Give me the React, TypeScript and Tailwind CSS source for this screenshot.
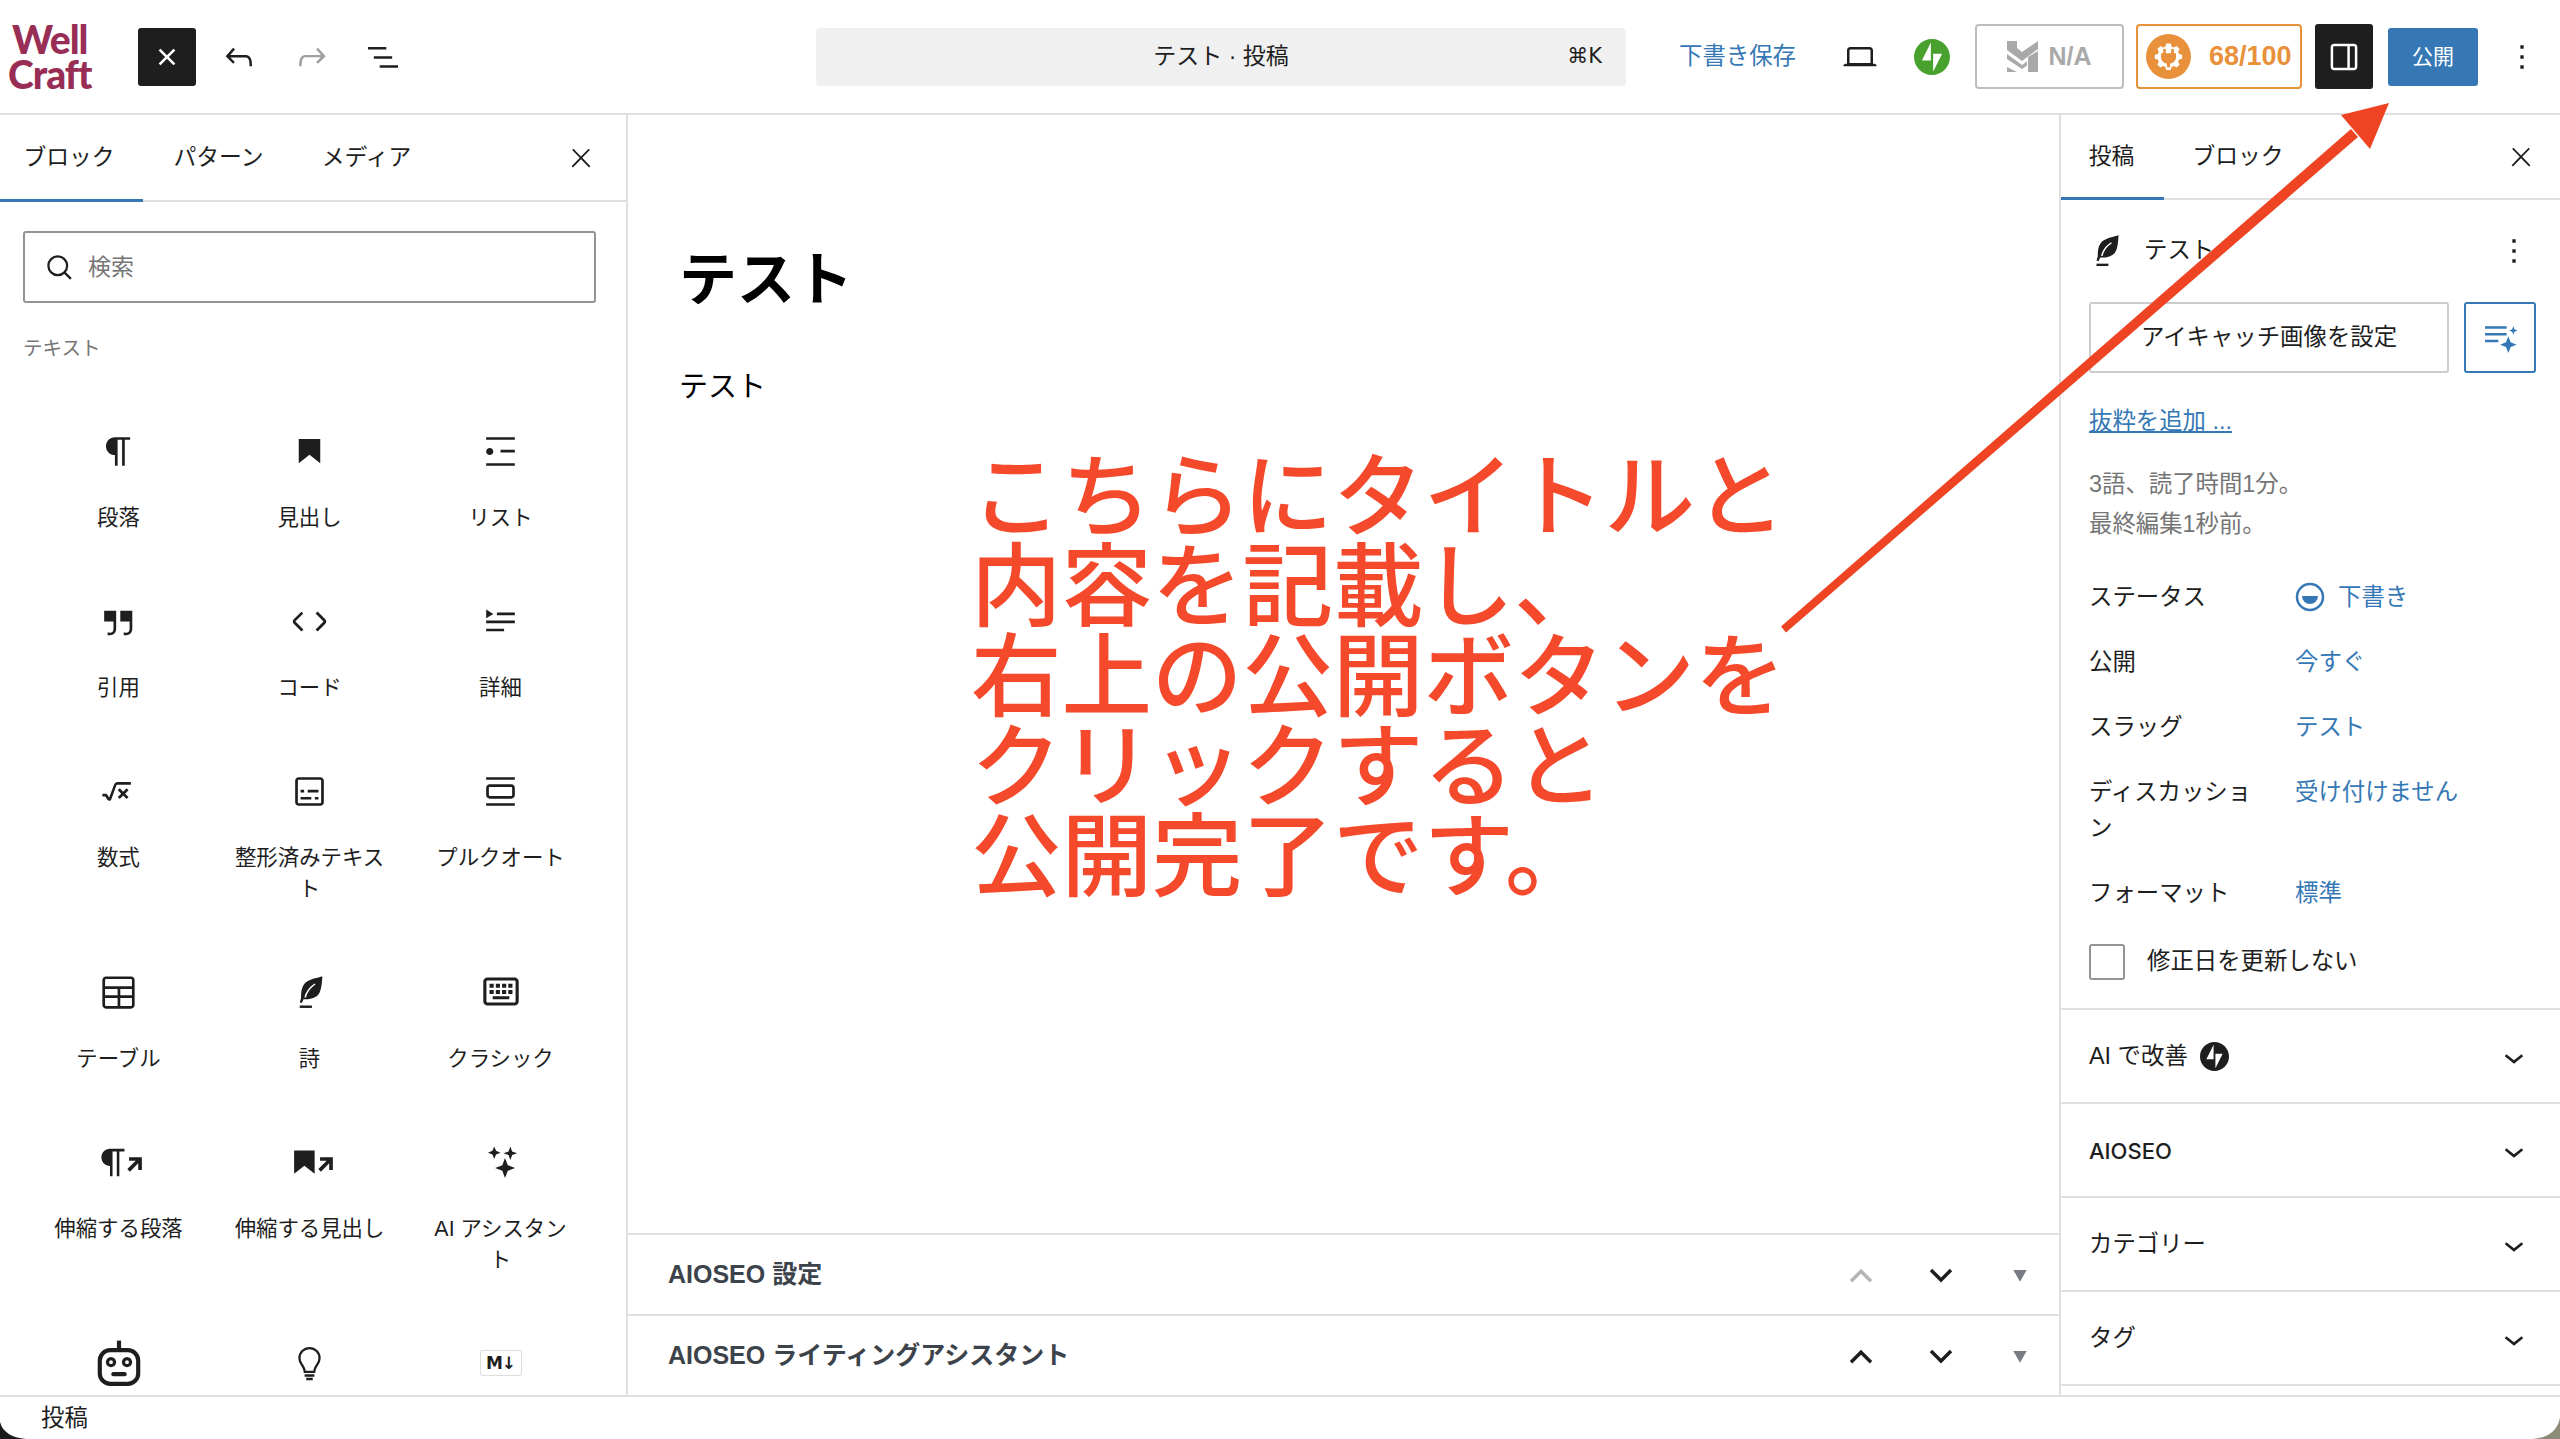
import type { ReactNode } from "react";

const FONT = "[font-family:'Liberation_Sans','Noto_Sans_CJK_JP',sans-serif]";

function Icon({ d, size = 43, className = "fill-[#1e1e1e]" }: { d: string; size?: number; className?: string }) {
    return (
        <svg viewBox="0 0 24 24" width={size} height={size} className={className}>
            <path d={d} />
        </svg>
    );
}

const paths = {
    close: "M12 13.06l3.712 3.713 1.061-1.06L13.061 12l3.712-3.712-1.06-1.06L12 10.938 8.288 7.227l-1.061 1.06L10.939 12l-3.712 3.712 1.06 1.061L12 13.061z",
    closeBig: "M13 11.8l6.1-6.3-1-1-6.1 6.2-6.1-6.2-1 1 6.1 6.3-6.5 6.7 1 1 6.5-6.6 6.5 6.6 1-1z",
    undo: "M18.3 11.7c-.6-.6-1.4-.9-2.3-.9H6.7l2.9-3.3-1.1-1-4.5 5L8.5 16l1-1-2.7-2.7H16c.5 0 .9.2 1.3.5 1 1 1 3.4 1 4.5v.3h1.5v-.2c0-1.5 0-4.3-1.5-5.7z",
    redo: "M15.6 6.5l-1.1 1 2.9 3.3H8c-.9 0-1.7.3-2.3.9-1.4 1.5-1.4 4.2-1.4 5.6v.2h1.5v-.3c0-1.1 0-3.5 1-4.5.3-.3.7-.5 1.3-.5h9.2L14.5 15l1.1 1.1 4.6-4.6-4.6-5z",
    listView: "M3 6h11v1.5H3V6Zm3.5 5.5h11V13h-11v-1.5ZM21 17H10v1.5h11V17Z",
    laptop: "M20.5 16h-.7V8c0-1.1-.9-2-2-2H6.2c-1.1 0-2 .9-2 2v8h-.7c-.8 0-1.5.7-1.5 1.5h20c0-.8-.7-1.5-1.5-1.5zM5.7 8c0-.3.2-.5.5-.5h11.6c.3 0 .5.2.5.5v7.6H5.7V8z",
    drawer: "M18 4H6c-1.1 0-2 .9-2 2v12c0 1.1.9 2 2 2h12c1.1 0 2-.9 2-2V6c0-1.1-.9-2-2-2zm-4 14.5H6c-.3 0-.5-.2-.5-.5V6c0-.3.2-.5.5-.5h8v13zm4.5-.5c0 .3-.2.5-.5.5h-2.5v-13H18c.3 0 .5.2.5.5v12z",
    more: "M13 19h-2v-2h2v2zm0-6h-2v-2h2v2zm0-6h-2V5h2v2z",
    chevronDown: "M17.5 11.6L12 16l-5.5-4.4.9-1.2L12 14l4.5-3.6 1 1.2z",
    paragraph: "m9.99609 14v-.2251l.00391.0001v6.225h1.5v-14.5h2.5v14.5h1.5v-14.5h3v-1.5h-8.50391c-2.76142 0-5 2.23858-5 5 0 2.7614 2.23858 5 5 5z",
    heading: "M6 5V18.5911L12 13.8473L18 18.5911V5H6Z",
    list: "M4 4v1.5h16V4H4zm8 8.5h8V11h-8v1.5zM4 20h16v-1.5H4V20zm4-8c0-1.1-.9-2-2-2s-2 .9-2 2 .9 2 2 2 2-.9 2-2z",
    quote: "M13 6v6h5.2v4c0 .8-.2 1.4-.5 1.7-.6.6-1.6.6-2.5.5h-.3v1.5h.5c1 0 2.3-.1 3.3-1 .6-.6 1-1.6 1-2.8V6H13zm-9 6h5.2v4c0 .8-.2 1.4-.5 1.7-.6.6-1.6.6-2.5.5h-.3v1.5h.5c1 0 2.3-.1 3.3-1 .6-.6 1-1.6 1-2.8V6H4v6z",
    code: "M20.8 10.7l-4.3-4.3-1.1 1.1 4.3 4.3c.1.1.1.3 0 .4l-4.3 4.3 1.1 1.1 4.3-4.3c.7-.8.7-1.9 0-2.6zM4.2 11.8l4.3-4.3-1-1-4.3 4.3c-.7.7-.7 1.8 0 2.5l4.3 4.3 1.1-1.1-4.3-4.3c-.2-.1-.2-.3-.1-.4z",
    details: "M4 16h10v1.5H4V16Zm0-4.5h16V13H4v-1.5ZM10 7h10v1.5H10V7ZM4 5.25l4 2.5-4 2.5v-5Z",
    math: "M11.2 6.8c-.7 0-1.4.5-1.6 1.1l-2.8 7.5-1.2-1.8c-.1-.2-.4-.3-.6-.3H3v1.5h1.6l1.2 1.8c.6.9 1.9.7 2.2-.3l2.9-7.9s.1-.2.2-.2h7.8V6.7h-7.8Zm5.3 3.4-1.9 1.9-1.9-1.9-1.1 1.1 1.9 1.9-1.9 1.9 1.1 1.1 1.9-1.9 1.9 1.9 1.1-1.1-1.9-1.9 1.9-1.9-1.1-1.1Z",
    preformatted: "M18 4H6c-1.1 0-2 .9-2 2v12c0 1.1.9 2 2 2h12c1.1 0 2-.9 2-2V6c0-1.1-.9-2-2-2zm.5 14c0 .3-.2.5-.5.5H6c-.3 0-.5-.2-.5-.5V6c0-.3.2-.5.5-.5h12c.3 0 .5.2.5.5v12zM7 16.5h6V15H7v1.5zm4-4h6V11h-6v1.5zM9 11H7v1.5h2V11zm6 5.5h2V15h-2v1.5z",
    pullquote: "M18 8H6c-1.1 0-2 .9-2 2v4c0 1.1.9 2 2 2h12c1.1 0 2-.9 2-2v-4c0-1.1-.9-2-2-2zm.5 6c0 .3-.2.5-.5.5H6c-.3 0-.5-.2-.5-.5v-4c0-.3.2-.5.5-.5h12c.3 0 .5.2.5.5v4zM4 4v1.5h16V4H4zm0 16h16v-1.5H4V20z",
    table: "M19 3H5c-1.1 0-2 .9-2 2v14c0 1.1.9 2 2 2h14c1.1 0 2-.9 2-2V5c0-1.1-.9-2-2-2zM5 4.5h14c.3 0 .5.2.5.5v3.5h-15V5c0-.3.2-.5.5-.5zm8 5.5h6.5v3.5H13V10zm-1.5 3.5h-7V10h7v3.5zm-7 5.5v-4h7v4.5H5c-.3 0-.5-.2-.5-.5zm14.5.5h-6V15h6.5v4c0 .3-.2.5-.5.5z",
    keyboard: "M16 15.5H8V14h8zM8.5 13h-2v-2h2zm3 0h-2v-2h2zm3 0h-2v-2h2zm3 0h-2v-2h2zm-9-3h-2V8h2zm3 0h-2V8h2zm3 0h-2V8h2zm3 0h-2V8h2zM18.5 6.5h-13a.5.5 0 0 0-.5.5v9.5a.5.5 0 0 0 .5.5h13a.5.5 0 0 0 .5-.5V7a.5.5 0 0 0-.5-.5zM5.5 5h13a2 2 0 0 1 2 2v9.5a2 2 0 0 1-2 2h-13a2 2 0 0 1-2-2V7a2 2 0 0 1 2-2z",
    sparkles: "M14.5 9.5l1.6 4 4 1.5-4 1.6-1.6 4-1.5-4-4-1.6 4-1.5zM8.5 3l1 2.5 2.5 1-2.5 1-1 2.5-1-2.5-2.5-1 2.5-1zM17.5 3l1 2.8 2.8 1-2.8 1-1 2.8-1-2.8-2.8-1 2.8-1z",
    leaf: "M20 2c-3 1-7.5 1.500-10.500 4C7 8.500 6.800 12 6.800 15.500L6 18l1.300.5 1-2.400c3.500.3 7.500-.5 9.300-3 2-2.900 2-7.500 2.400-11.600zM8.900 15c.8-3.300 2.600-6 6.300-8.500l.5.600c-3.400 2.400-5 4.800-5.800 8z",
    leafLine: "M6 20h7.500v1.500H6z",
    stretchArrow: "M15.5 7.5h6v6h-1.7v-3.1l-3.9 3.9-1.2-1.2 3.9-3.9h-3.1z",
    jetpack: "M16 0C7.2 0 0 7.2 0 16s7.2 16 16 16 16-7.2 16-16S24.8 0 16 0ZM15 19H7l8-16v16Zm2 10V13h8l-8 16Z",
};

function Jetpack({ size, color }: { size: number; color: string }) {
    return (
        <svg viewBox="0 0 32 32" width={size} height={size} fill={color}>
            <path d={paths.jetpack} />
        </svg>
    );
}

function Feather({ size = 39 }: { size?: number }) {
    return (
        <svg viewBox="0 0 24 24" width={size} height={size} fill="#1e1e1e">
            <path d={paths.leaf} fillRule="evenodd" />
            <path d={paths.leafLine} />
        </svg>
    );
}

function Stretchy({ d }: { d: string }) {
    return (
        <svg viewBox="0 0 24 24" width={41} height={41} fill="#1e1e1e" className="overflow-visible">
            <path d={d} transform="translate(-3 0)" />
            <path d={paths.stretchArrow} transform="translate(-1.2 -.5) scale(1.25)" />
        </svg>
    );
}

function Robot() {
    return (
        <svg viewBox="0 0 30 30" width={48} height={48} fill="none" stroke="#1e1e1e" strokeWidth="2.6">
            <path d="M15 1v6" />
            <rect x="3" y="7" width="24" height="21" rx="6.5" />
            <circle cx="10" cy="14.5" r="2.2" strokeWidth="2" />
            <circle cx="20" cy="14.5" r="2.2" strokeWidth="2" />
            <path d="M11.5 22h7" strokeLinecap="round" />
        </svg>
    );
}

function Bulb() {
    return (
        <svg viewBox="0 0 24 24" width={39} height={39} fill="none" stroke="#1e1e1e" strokeWidth="1.4">
            <path d="M12 2.5a6.2 6.2 0 0 0-6.2 6.3c0 2.4 1.4 3.6 2.4 5.4.5.9.8 2 .9 3h5.8c.1-1 .4-2.1.9-3 1-1.8 2.4-3 2.4-5.4A6.2 6.2 0 0 0 12 2.5z" />
            <path d="M9 19.4h6M10 21.5h4" strokeWidth="1.5" />
        </svg>
    );
}

function Markdown() {
    return (
        <div className="flex h-[26px] w-[42px] items-center justify-center rounded-[2px] border border-[#ddd] text-[17px] leading-none font-bold tracking-[-1px] text-[#1e1e1e] [font-family:'DejaVu_Sans',sans-serif]">
            M↓
        </div>
    );
}

const blocks: { label: string; icon: ReactNode }[] = [
    { label: "段落", icon: <Icon d={paths.paragraph} /> },
    { label: "見出し", icon: <Icon d={paths.heading} /> },
    { label: "リスト", icon: <Icon d={paths.list} /> },
    { label: "引用", icon: <Icon d={paths.quote} /> },
    { label: "コード", icon: <Icon d={paths.code} /> },
    { label: "詳細", icon: <Icon d={paths.details} /> },
    { label: "数式", icon: <Icon d={paths.math} /> },
    { label: "整形済みテキスト", icon: <Icon d={paths.preformatted} /> },
    { label: "プルクオート", icon: <Icon d={paths.pullquote} /> },
    { label: "テーブル", icon: <Icon d={paths.table} /> },
    { label: "詩", icon: <Feather /> },
    { label: "クラシック", icon: <Icon d={paths.keyboard} size={50} /> },
    { label: "伸縮する段落", icon: <Stretchy d={paths.paragraph} /> },
    { label: "伸縮する見出し", icon: <Stretchy d={paths.heading} /> },
    { label: "AI アシスタン\nト", icon: <Icon d={paths.sparkles} /> },
    { label: "", icon: <Robot /> },
    { label: "", icon: <Bulb /> },
    { label: "", icon: <Markdown /> },
];

function Header() {
    return (
        <header className="flex h-[115px] shrink-0 items-center border-b-2 border-[#e0e0e0] bg-white">
            <div className="w-[138px] pl-[8px] text-[39px] leading-[35px] font-black tracking-[-1px] text-[#982e55] [font-family:'Lato',sans-serif]">
                <div className="pl-[4px]">Well</div>
                <div>Craft</div>
            </div>
            <button className="flex h-[58px] w-[58px] items-center justify-center rounded-[3px] bg-[#1e1e1e]">
                <Icon d={paths.close} size={42} className="fill-white" />
            </button>
            <div className="ml-[23px]"><Icon d={paths.undo} size={40} /></div>
            <div className="ml-[33px]"><Icon d={paths.redo} size={40} className="fill-[#a0a0a0]" /></div>
            <div className="ml-[31px]"><Icon d={paths.listView} size={40} /></div>
            <div className="relative ml-[413px] flex h-[58px] w-[810px] items-center justify-center rounded-[4px] bg-[#f0f0f0] text-[23px] text-[#1e1e1e]">
                テスト · 投稿
                <span className="absolute right-[24px] text-[21px] [font-family:'DejaVu_Sans','Liberation_Sans',sans-serif]">⌘K</span>
            </div>
            <div className="ml-[53px] w-[116px] text-[23.4px] whitespace-nowrap text-[#3578b5]">下書き保存</div>
            <div className="ml-[45px]"><Icon d={paths.laptop} size={40} /></div>
            <div className="ml-[34px]"><Jetpack size={36} color="#48a02d" /></div>
            <div className="ml-[25px] flex h-[65px] w-[149px] items-center justify-center gap-[10px] rounded-[4px] border-2 border-[#bdbdbd]">
                <svg viewBox="0 0 31 31" width={31} height={31} fill="#a9a9a9">
                    <path d="M0 0h10v7l5 4L31 0v8L15 20 0 9zM21 16l10-6v21H21zM0 13l15 11 5-3.500v4l-5 3.500-15-10zM0 26l10 5H0z" />
                </svg>
                <span className="text-[25px] font-bold text-[#a9a9a9]">N/A</span>
            </div>
            <div className="ml-[12px] flex h-[65px] w-[166px] items-center gap-[18px] rounded-[4px] border-2 border-[#e8903a] pl-[8px]">
                <svg viewBox="0 0 42 42" width={45} height={45} className="shrink-0">
                    <circle cx="21" cy="21" r="21" fill="#e8903a" />
                    <path d="M18 7h6l1 4 3 1.300 3.500-2 4 4-2 3.500 1.300 3 4 1v5l-4 1-1.300 3 2 3.500-4 4-3.500-2-3 1.300-1 4h-6l-1-4-3-1.300-3.500 2-4-4 2-3.500-1.300-3-4-1v-5l4-1 1.300-3-2-3.500 4-4 3.500 2 3-1.300z" fill="#fff" transform="translate(21 21) scale(.72) translate(-21 -24)" />
                    <path d="M16 14h2.500v4h5v-4H26v4h2v3.500c0 3-2 5.500-5.500 6V31h-3v-3.500c-3.500-.5-5.500-3-5.500-6V18h2z" fill="#e8903a" />
                </svg>
                <span className="text-[27px] font-bold whitespace-nowrap text-[#e8903a]">68/100</span>
            </div>
            <button className="ml-[13px] flex h-[65px] w-[58px] items-center justify-center rounded-[3px] bg-[#1e1e1e]">
                <Icon d={paths.drawer} size={40} className="fill-white" />
            </button>
            <button className="ml-[15px] h-[58px] w-[90px] rounded-[3px] bg-[#3578b5] text-[21px] text-white">公開</button>
            <div className="ml-[24px]"><Icon d={paths.more} size={40} /></div>
        </header>
    );
}

function Tab({ label, active, width }: { label: string; active?: boolean; width: string }) {
    return (
        <div className={`relative flex h-full items-center justify-center text-[22.8px] whitespace-nowrap text-[#1e1e1e] ${width}`}>
            {label}
            {active && <span className="absolute right-0 bottom-[-2px] left-0 h-[3px] bg-[#3578b5]" />}
        </div>
    );
}

function BlockInserter() {
    return (
        <aside className="flex w-[628px] shrink-0 flex-col overflow-hidden border-r-2 border-[#e0e0e0]">
            <div className="relative flex h-[87px] shrink-0 items-center border-b-2 border-[#e0e0e0]">
                <Tab label="ブロック" active width="w-[143px] pr-[5px]" />
                <Tab label="パターン" width="w-[147px] ml-[2px]" />
                <Tab label="メディア" width="w-[147px] ml-[1px]" />
                <div className="absolute right-[30px]"><Icon d={paths.closeBig} size={30} /></div>
            </div>
            <div className="mt-[29px] mr-[30px] ml-[23px] flex h-[72px] shrink-0 items-center rounded-[3px] border-2 border-[#949494] pl-[19px] text-[23px] text-[#757575]">
                <svg viewBox="0 0 24 24" width={30} height={30} fill="none" stroke="#1e1e1e" strokeWidth="1.8">
                    <circle cx="11" cy="11" r="7.500" />
                    <path d="M16.500 16.500l5 5" />
                </svg>
                <span className="ml-[14px]">検索</span>
            </div>
            <div className="mt-[31px] mr-[30px] ml-[23px] h-[28px] shrink-0 text-[19.5px] leading-[28px] text-[#757575]">テキスト</div>
            <div className="mt-[39px] mr-[30px] ml-[23px] grid grid-cols-3">
                {blocks.map((b, i) => (
                    <div key={i} className="flex flex-col items-center pt-[30px] pb-[37px]">
                        <div className="flex h-[40px] items-center justify-center">{b.icon}</div>
                        <div className="mt-[32px] max-w-[160px] text-center text-[21.4px] leading-[31px] whitespace-pre-line text-[#1e1e1e]">{b.label}</div>
                    </div>
                ))}
            </div>
        </aside>
    );
}

function MetaBox({ title, upDisabled }: { title: string; upDisabled?: boolean }) {
    return (
        <div className="flex h-[81px] shrink-0 items-center border-t-2 border-[#e0e0e0] pl-[40px]">
            <div className="flex-1 text-[25px] font-semibold text-[#3c434a]">{title}</div>
            <svg viewBox="0 0 24 24" width={30} height={30} fill="none" stroke={upDisabled ? "#b5b5b5" : "#1e1e1e"} strokeWidth="2.8">
                <path d="M4 17l8-8 8 8" />
            </svg>
            <svg viewBox="0 0 24 24" width={30} height={30} fill="none" stroke="#1e1e1e" strokeWidth="2.8" className="ml-[50px]">
                <path d="M4 8l8 8 8-8" />
            </svg>
            <svg viewBox="0 0 24 24" width={20} height={20} fill="#787c82" className="mr-[29px] ml-[54px]">
                <path d="M4 6h16l-8 14z" />
            </svg>
        </div>
    );
}

function Editor() {
    return (
        <main className="flex min-w-0 flex-1 flex-col">
            <div className="flex-1 pt-[130px] pl-[51px] text-black">
                <div className="text-[58px] leading-[70px] font-bold">テスト</div>
                <div className="mt-[52px] text-[29px] leading-[40px]">テスト</div>
            </div>
            <MetaBox title="AIOSEO 設定" upDisabled />
            <MetaBox title="AIOSEO ライティングアシスタント" />
        </main>
    );
}

function MetaRow({ label, children }: { label: string; children: ReactNode }) {
    return (
        <div className="flex text-[23.4px] leading-[36px]">
            <div className="w-[206px] shrink-0 pr-[28px] text-[#1e1e1e]">{label}</div>
            <div className="text-[#3578b5]">{children}</div>
        </div>
    );
}

function PanelRow({ children }: { children: ReactNode }) {
    return (
        <div className="flex h-[94px] shrink-0 items-center justify-between border-b-2 border-[#e0e0e0] pt-[2px] pr-[26px] pl-[28px] text-[23.4px] text-[#1e1e1e]">
            {children}
            <Icon d={paths.chevronDown} size={40} />
        </div>
    );
}

function SettingsSidebar() {
    return (
        <aside className="flex w-[501px] shrink-0 flex-col overflow-hidden border-l-2 border-[#e0e0e0]">
            <div className="relative flex h-[85px] shrink-0 items-center border-b-2 border-[#e0e0e0]">
                <Tab label="投稿" active width="w-[105px] -ml-[2px]" />
                <Tab label="ブロック" width="w-[90px] ml-[29px]" />
                <div className="absolute right-[24px]"><Icon d={paths.closeBig} size={30} /></div>
            </div>
            <div className="pr-[24px] pl-[28px]">
                <div className="mt-[31px] flex h-[40px] items-center text-[23.4px] text-[#1e1e1e]">
                    <div className="-ml-[2px]"><Feather size={38} /></div>
                    <span className="ml-[19px] flex-1">テスト</span>
                    <div className="mr-[2px]"><Icon d={paths.more} size={40} /></div>
                </div>
                <div className="mt-[31px] flex h-[71px] gap-[15px]">
                    <div className="flex w-[360px] items-center justify-center rounded-[3px] border-2 border-[#cccccc] text-[23.4px] text-[#1e1e1e]">アイキャッチ画像を設定</div>
                    <div className="flex w-[72px] items-center justify-center rounded-[3px] border-2 border-[#3578b5]">
                        <svg viewBox="0 0 24 24" width={40} height={40} fill="#3578b5">
                            <path d="M3 5h13v1.500H3zM3 9h13v1.500H3zM3 13h8v1.500H3zM17 11l1.400 3.600 3.600 1.400-3.600 1.400L17 21l-1.400-3.600-3.600-1.400 3.600-1.400zM20 5l.7 1.800 1.800.7-1.800.7L20 10l-.7-1.800-1.800-.7 1.800-.7z" />
                        </svg>
                    </div>
                </div>
                <div className="mt-[30px] text-[23.4px] leading-[36px] text-[#3578b5] underline">抜粋を追加 ...</div>
                <div className="mt-[25px] text-[23.4px] leading-[40px] text-[#757575]">
                    <div>3語、読了時間1分。</div>
                    <div>最終編集1秒前。</div>
                </div>
                <div className="mt-[35px] flex flex-col gap-[29px]">
                    <MetaRow label="ステータス">
                        <span className="flex items-center gap-[13px]">
                            <svg viewBox="0 0 30 30" width={30} height={30} fill="none" className="shrink-0">
                                <circle cx="15" cy="15" r="13" stroke="#3578b5" strokeWidth="2.5" />
                                <path d="M7 14h16a8 8 0 0 1-16 0z" fill="#3578b5" />
                            </svg>
                            下書き
                        </span>
                    </MetaRow>
                    <MetaRow label="公開">今すぐ</MetaRow>
                    <MetaRow label="スラッグ">テスト</MetaRow>
                    <MetaRow label="ディスカッション">受け付けません</MetaRow>
                    <MetaRow label="フォーマット">標準</MetaRow>
                </div>
                <div className="mt-[33px] flex h-[36px] items-center text-[23.4px] text-[#1e1e1e]">
                    <div className="h-[36px] w-[36px] rounded-[3px] border-2 border-[#949494]" />
                    <span className="ml-[22px]">修正日を更新しない</span>
                </div>
            </div>
            <div className="mt-[28px] border-b-2 border-[#e0e0e0]" />
            <PanelRow>
                <span className="flex items-center gap-[12px]">
                    AI で改善
                    <Jetpack size={29} color="#1e1e1e" />
                </span>
            </PanelRow>
            <PanelRow><span className="text-[22px] font-medium [font-family:'Inter',sans-serif]">AIOSEO</span></PanelRow>
            <PanelRow>カテゴリー</PanelRow>
            <PanelRow>タグ</PanelRow>
        </aside>
    );
}

function Annotation() {
    return (
        <>
            <div className="absolute top-[453px] left-[971px] text-[90.5px] leading-[90px] font-medium whitespace-nowrap text-[#f5492b]">
                <div>こちらにタイトルと</div>
                <div>内容を記載し、</div>
                <div>右上の公開ボタンを</div>
                <div>クリックすると</div>
                <div>公開完了です。</div>
            </div>
            <svg className="absolute top-0 left-0" width={2560} height={1439} fill="#ee4423">
                <path d="M1781 626.500L2351 129L2358 137L1786 632.500z" />
                <path d="M2389 103L2341 115L2370 149z" />
            </svg>
        </>
    );
}

export default function App() {
    return (
        <div className={`relative flex h-[1439px] w-[2560px] flex-col overflow-hidden bg-white ${FONT}`}>
            <Header />
            <div className="flex min-h-0 flex-1">
                <BlockInserter />
                <Editor />
                <SettingsSidebar />
            </div>
            <footer className="z-10 flex h-[44px] shrink-0 items-center border-t-2 border-[#e0e0e0] bg-white pt-[2px] pl-[41px] text-[23.4px] text-[#1e1e1e]">投稿</footer>
            <Annotation />
            {/* window corners from the original capture */}
            <svg className="absolute bottom-0 left-0 z-20" width={26} height={17}>
                <path d="M0 0Q4 15 26 17H0z" fill="#1a1a1a" />
            </svg>
            <svg className="absolute right-0 bottom-0 z-20" width={27} height={21}>
                <path d="M27 0Q23 19 0 21H27z" fill="#8d8a76" />
            </svg>
        </div>
    );
}
